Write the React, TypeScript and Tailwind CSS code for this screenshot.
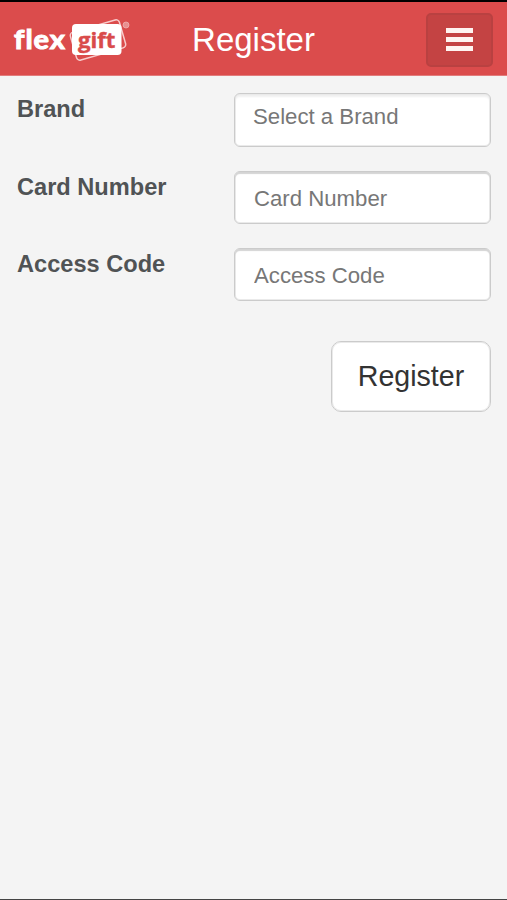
import React, { useState } from "react";

type Field = {
  name: string;
  label: string;
};

const fields: Field[] = [
  { name: "cardNumber", label: "Card Number" },
  { name: "accessCode", label: "Access Code" },
];

const Logo = () => (
  <svg width="120" height="48" viewBox="0 0 120 48" aria-label="flexgift">
    <text
      x="3"
      y="35.5"
      fill="#fff"
      stroke="#fff"
      strokeWidth="1"
      textLength="52"
      lengthAdjust="spacingAndGlyphs"
      className="font-['Lato',sans-serif] text-[27px] font-bold tracking-[0.9px]"
    >
      flex
    </text>
    <rect
      x="61.5"
      y="12.5"
      width="51"
      height="29"
      rx="3.5"
      fill="none"
      stroke="#f8cccc"
      strokeWidth="1.5"
      transform="rotate(-16 87 27)"
    />
    <rect x="61" y="11" width="49.5" height="31" rx="4" fill="#fff" />
    <text
      x="67"
      y="34.5"
      fill="#d94b4b"
      stroke="#d94b4b"
      strokeWidth="0.4"
      textLength="37.5"
      lengthAdjust="spacingAndGlyphs"
      className="font-['Open_Sans',sans-serif] text-[22px] font-bold"
    >
      gift
    </text>
    <circle cx="115" cy="12" r="3" fill="#e88f8f" stroke="#f0b0b0" strokeWidth="0.8" />
  </svg>
);

const App = () => {
  const [values, setValues] = useState<Record<string, string>>({});

  return (
    <div className="flex h-screen flex-col overflow-hidden border-b border-[#444] bg-[#f4f4f4] font-['Liberation_Sans',Arial,sans-serif]">
      <header className="grid h-[76px] shrink-0 grid-cols-[181px_1fr_181px] items-center border-t-2 border-b border-t-black border-b-[#e27c7c] bg-[#db4c4c] pt-[2px]">
        <div className="pb-[5px] pl-[11px]">
          <Logo />
        </div>
        <h1 className="pt-px text-center text-[33px] leading-[40px] text-white">Register</h1>
        <button
          aria-label="Menu"
          className="mr-[14px] flex h-[54px] w-[67px] flex-col items-center justify-center gap-1 justify-self-end rounded-[5px] border-2 border-[#b94141] bg-[#c44343]"
        >
          <span className="h-[5px] w-[27px] bg-[#fff4f1]" />
          <span className="h-[5px] w-[27px] bg-[#fff4f1]" />
          <span className="h-[5px] w-[27px] bg-[#fff4f1]" />
        </button>
      </header>

      <form className="flex flex-col pt-[17px] pr-4 pl-[17px]" onSubmit={(e) => e.preventDefault()}>
        <div className="mb-6 flex justify-between">
          <span className="pt-[2px] text-[23.6px] leading-[28px] font-bold text-[#505355]">Brand</span>
          <button
            type="button"
            className="flex h-[54px] w-[257px] items-start rounded-[6px] border border-[#cbcbcb] bg-white pt-[9px] pl-[18px] text-[22.2px] leading-[28px] text-[#777] shadow-[inset_0_0_0_1px_#eaeaea,inset_0_3px_2px_#f0f0f0]"
          >
            Select a Brand
          </button>
        </div>
        {fields.map((field) => (
          <div key={field.name} className="mb-6 flex justify-between">
            <label
              htmlFor={field.name}
              className="pt-[2px] text-[23.6px] leading-[28px] font-bold text-[#505355]"
            >
              {field.label}
            </label>
            <input
              id={field.name}
              value={values[field.name] ?? ""}
              onChange={(e) => setValues({ ...values, [field.name]: e.target.value })}
              placeholder={field.label}
              className="h-[53px] w-[257px] rounded-[6px] border border-[#cbcbcb] bg-white pt-[2px] pl-[19px] text-[22.2px] text-[#777] shadow-[inset_0_2px_1px_#d4d4d4,inset_0_0_0_1px_#eaeaea] placeholder:text-[#777]"
            />
          </div>
        ))}
        <button
          type="submit"
          className="mt-[16px] h-[71px] w-[160px] self-end rounded-[10px] border border-[#cbcbcb] bg-white text-[28.6px] text-[#333] shadow-[inset_0_0_0_1px_#eaeaea]"
        >
          Register
        </button>
      </form>
    </div>
  );
};

export default App;
